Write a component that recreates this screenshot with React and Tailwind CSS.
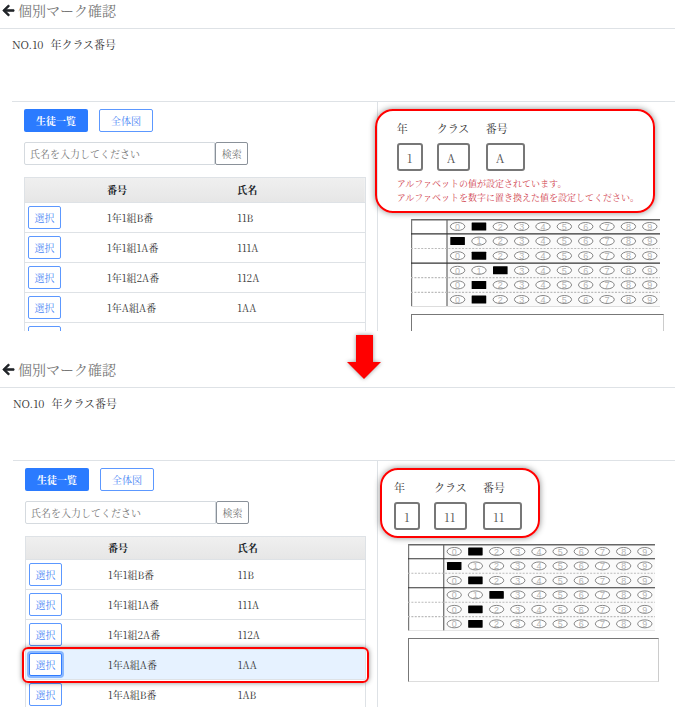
import React from "react";
import { FaArrowLeft } from "react-icons/fa";

const STUDENTS = [
  { number: "1年1組B番", name: "11B" },
  { number: "1年1組1A番", name: "111A" },
  { number: "1年1組2A番", name: "112A" },
  { number: "1年A組A番", name: "1AA" },
  { number: "1年A組B番", name: "1AB" },
];

const DIGITS = [0, 1, 2, 3, 4, 5, 6, 7, 8, 9];
// marked digit for each row of the sheet
const MARKS = [1, 0, 1, 2, 1, 1];
const SOLID_LINES = [1, 3];

function MarkSheet({ className }) {
  return (
    <svg viewBox="0 0 249 88" className={className} role="img" aria-label="マークシート">
      <rect x="36" y="1" width="213" height="86" fill="#fafafa" />
      <line x1="0" x2="249" y1="0.7" y2="0.7" stroke="#666" strokeWidth="1.4" />
      <line x1="0.6" x2="0.6" y1="0" y2="88" stroke="#777" strokeWidth="1.2" />
      <line x1="36" x2="36" y1="0" y2="88" stroke="#666" strokeWidth="1.2" />
      <line x1="0" x2="249" y1="87.5" y2="87.5" stroke="#ddd" strokeWidth="1" />
      {MARKS.map((mark, row) => {
        const cy = 7.5 + row * 14.6;
        const solid = SOLID_LINES.includes(row);
        return (
          <g key={row}>
            {row > 0 && (
              <line
                x1="0"
                x2="249"
                y1={cy - 7.2}
                y2={cy - 7.2}
                stroke={solid ? "#333" : "#bbb"}
                strokeWidth="1.2"
                strokeDasharray={solid ? undefined : "2 1.4"}
              />
            )}
            {DIGITS.map((d) => {
              const cx = 46.6 + d * 21.35;
              if (d === mark) {
                return <rect key={d} x={cx - 7.3} y={cy - 4} width="14.6" height="8" rx="0.5" fill="#000" />;
              }
              return (
                <g key={d}>
                  <ellipse cx={cx} cy={cy} rx="7.2" ry="4" fill="#fff" stroke="#777" strokeWidth="0.9" />
                  <text x={cx} y={cy + 3.2} textAnchor="middle" fontSize="9" fill="#b5b5b5" className="font-['Liberation_Sans',sans-serif]">
                    {d}
                  </text>
                </g>
              );
            })}
          </g>
        );
      })}
    </svg>
  );
}

function StudentTable({ rows, selected, headHeight }) {
  return (
    <table className="mt-3 w-full table-fixed border-separate border-spacing-0 border-x border-[#dee2e6] text-left text-[10px] leading-4">
      <thead>
        <tr className={`bg-linear-to-b from-[#f0f0f0] to-[#e6e6e6] text-[#212529] ${headHeight}`}>
          <th className="w-[23%] border-y border-[#dee2e6] p-0" aria-label="操作" />
          <th className="w-[38%] border-y border-[#dee2e6] p-0 pl-1 font-bold">番号</th>
          <th className="border-y border-[#dee2e6] p-0 pl-[5px] font-bold">氏名</th>
        </tr>
      </thead>
      <tbody>
        {rows.map((s, i) => {
          const active = i === selected;
          return (
            <tr key={s.name} className={active ? "relative h-[30px] bg-[#e6f2ff]" : "h-[30px]"}>
              <td className="border-b border-[#dee2e6] p-0 pl-[3px]">
                <button
                  type="button"
                  className={
                    active
                      ? "block h-[23px] w-[33px] rounded-[2px] border border-[#2f7bff] bg-white text-[#4a86f5] ring-2 ring-[#8ab8ff]"
                      : "block h-[23px] w-[33px] rounded-[2px] border border-[#5c98ff] bg-white text-[#4a86f5]"
                  }
                >
                  選択
                </button>
                {active && (
                  <span className="pointer-events-none absolute -inset-x-1 -top-[3px] -bottom-[3px] rounded-md border-2 border-[#ff0000] shadow-[0_0_5px_rgba(0,0,0,0.45)]" />
                )}
              </td>
              <td className="border-b border-[#dee2e6] p-0 pl-1">{s.number}</td>
              <td className="border-b border-[#dee2e6] p-0 pl-[5px]">{s.name}</td>
            </tr>
          );
        })}
      </tbody>
    </table>
  );
}

function Field({ id, label, value, width }) {
  return (
    <div className="flex flex-col gap-[7px]">
      <label htmlFor={id} className="text-[11px] leading-4 whitespace-nowrap">{label}</label>
      <input
        id={id}
        defaultValue={value}
        className={`h-7 rounded-[3px] border-2 border-[#777] bg-white pl-2 text-[12px] text-[#555] ${width}`}
      />
    </div>
  );
}

function MarkFields({ id, values, error, className }) {
  return (
    <section className={`rounded-[18px] border-2 border-[#ff0000] pt-[9px] pb-[6px] shadow-[0_0_6px_rgba(0,0,0,0.45)] ${className}`}>
      <div className="flex">
        <div className="mr-[14px]">
          <Field id={`${id}-year`} label="年" value={values[0]} width="w-[26px]" />
        </div>
        <div className="mr-4">
          <Field id={`${id}-class`} label="クラス" value={values[1]} width="w-[33px]" />
        </div>
        <Field id={`${id}-number`} label="番号" value={values[2]} width="w-[39px]" />
      </div>
      {error && (
        <p className="mt-[6px] text-[9px] leading-[14px] whitespace-nowrap text-[#d0404c]">
          アルファベットの値が設定されています。
          <br />
          アルファベットを数字に置き換えた値を設定してください。
        </p>
      )}
    </section>
  );
}

function Screen({ id, rows, selected, headHeight, className, indent, children }) {
  return (
    <section className={`overflow-hidden ${className}`}>
      <header className="flex h-[29px] items-center gap-[3px] border-b border-[#dee2e6] pb-2 pl-[2px]">
        <a href="#back" aria-label="戻る" className="text-[#212529]">
          <FaArrowLeft size={13} strokeWidth={24} />
        </a>
        <h1 className="text-[14px] leading-4 text-[#777]">個別マーク確認</h1>
      </header>
      <div className={indent}>
        <h2 className="flex gap-[7px] pt-[7px] pb-[49px] text-[11px] leading-4">
          <span>NO.10</span>
          <span>年クラス番号</span>
        </h2>
        <div className="flex border-t border-[#dee2e6]">
          <div className="w-[55%] shrink-0 pt-[7px] pr-[11px] pl-3">
            <div className="flex gap-[11px] text-[10px]">
              <button type="button" className="h-[23px] w-16 rounded-[2px] bg-[#2b7bff] font-bold text-white">
                生徒一覧
              </button>
              <button type="button" className="h-[23px] w-[54px] rounded-[2px] border border-[#5c98ff] text-[#4a86f5]">
                全体図
              </button>
            </div>
            <div className="mt-[10px] flex text-[10px]">
              <input
                id={`${id}-search`}
                type="text"
                aria-label="氏名"
                placeholder="氏名を入力してください"
                className="h-[23px] w-[56%] rounded-l-[2px] border border-[#d5dadf] px-[5px] placeholder:text-[#777]"
              />
              <button type="button" className="h-[23px] w-[33px] rounded-[2px] border border-[#8a9199] text-[#777]">
                検索
              </button>
            </div>
            <StudentTable rows={rows} selected={selected} headHeight={headHeight} />
          </div>
          <div className="min-w-0 grow border-l border-[#dee2e6] pt-[7px]">{children}</div>
        </div>
      </div>
    </section>
  );
}

export default function App() {
  return (
    <main
      lang="ja"
      className="relative min-h-screen bg-white font-['Noto_Serif_CJK_JP','Noto_Sans_CJK_JP',serif] text-[#333]"
    >
      <Screen id="before" rows={STUDENTS} headHeight="h-[26px]" className="max-h-[331px]" indent="ml-3">
        <MarkFields id="before" values={["1", "A", "A"]} error className="-ml-[3px] w-[280px] pl-5" />
        <MarkSheet className="mt-[6px] ml-[33px] w-[249px]" />
        <div className="mt-[7px] ml-[33px] h-11 w-[253px] border border-[#777] border-r-[#ccc]" />
      </Screen>

      <svg viewBox="0 0 34 44" className="absolute top-[335px] left-[347px] w-[34px] drop-shadow-[0_0_2px_rgba(0,0,0,0.4)]" aria-hidden="true">
        <path d="M9 0H26V27H34L17 44L0 27H9Z" fill="#ff0000" />
      </svg>

      <Screen id="after" rows={STUDENTS} selected={3} headHeight="h-6" className="mt-7 max-h-[348px]" indent="ml-[13px]">
        <MarkFields id="after" values={["1", "11", "11"]} className="ml-[2px] w-[160px] pl-3" />
        <MarkSheet className="mt-[6px] ml-[30px] w-[247px]" />
        <div className="mt-[7px] ml-[30px] h-11 w-[251px] border border-[#777] border-r-[#ccc] border-b-[#ddd]" />
      </Screen>
    </main>
  );
}
